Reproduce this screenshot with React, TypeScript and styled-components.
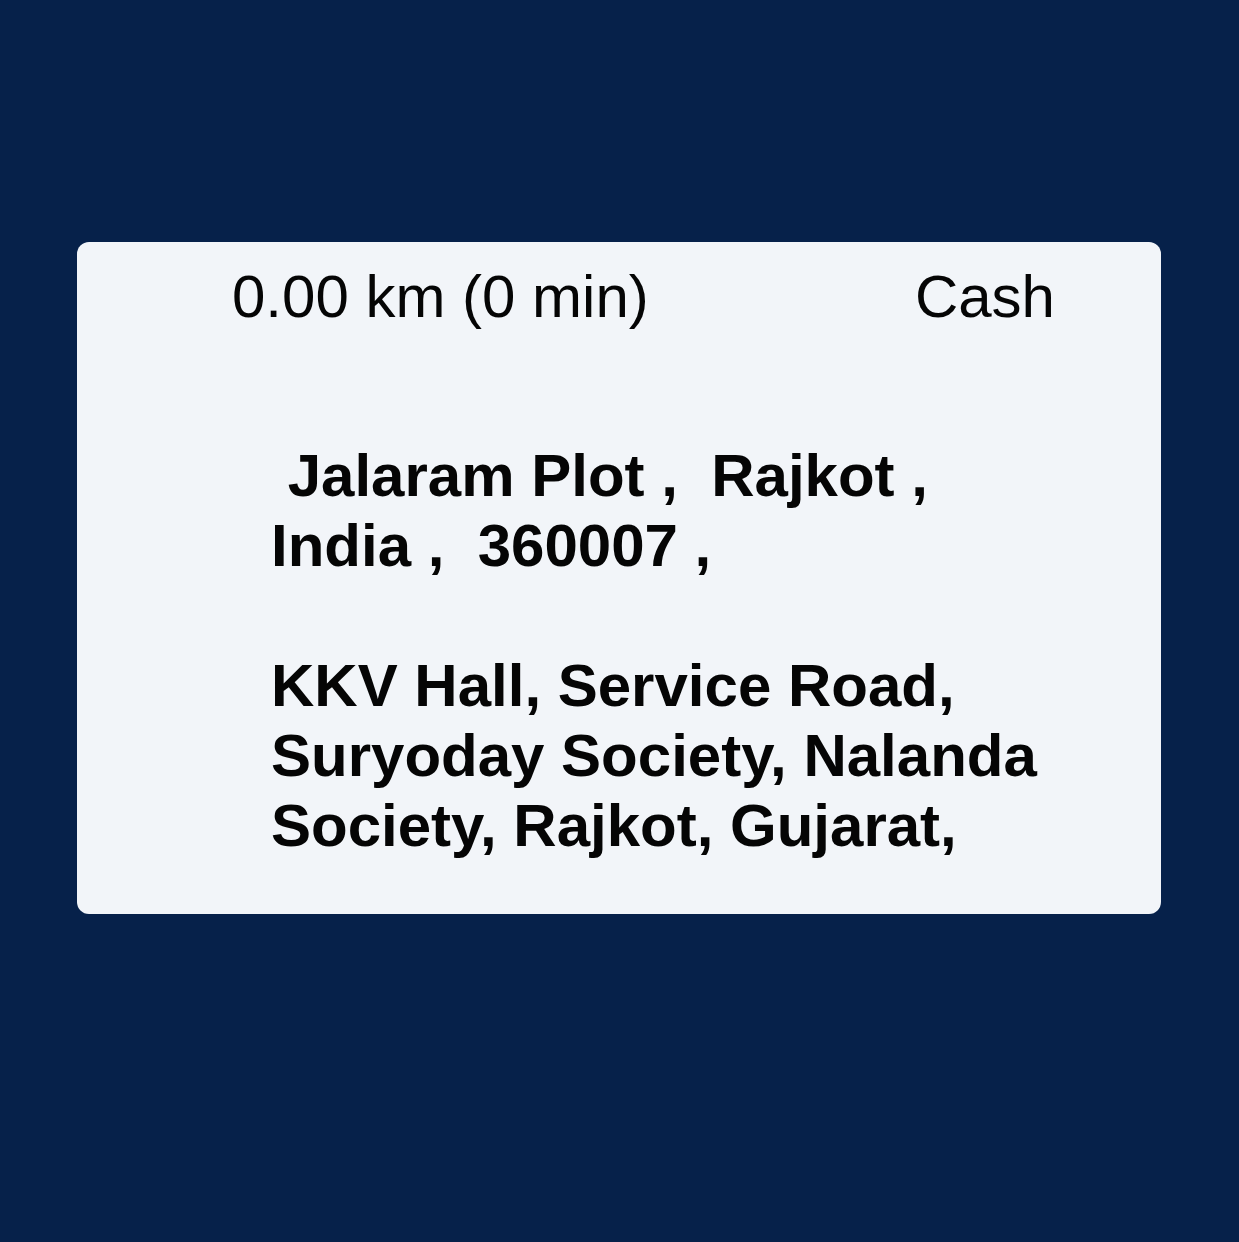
import React from 'react';
import styled, { createGlobalStyle } from 'styled-components';

const GlobalStyle = createGlobalStyle`
  html, body {
    margin: 0;
    padding: 0;
    background: #06214a;
  }
  body {
    font-family: 'Liberation Sans', Arial, Helvetica, sans-serif;
  }
`;

const Page = styled.div`
  width: 1239px;
  height: 1242px;
  background: #06214a;
  display: flex;
  align-items: center;
  justify-content: center;
  box-sizing: border-box;
  padding-bottom: 86px;
`;

const Card = styled.div`
  width: 1084px;
  height: 672px;
  box-sizing: border-box;
  background: #f2f5f9;
  border-radius: 12px;
  padding: 20px 106px 0 155px;
  display: flex;
  flex-direction: column;
  margin-left: -1px;
`;

const InfoRow = styled.div`
  display: flex;
  justify-content: space-between;
  align-items: baseline;
`;

const InfoText = styled.span`
  font-size: 60px;
  line-height: 70px;
  font-weight: 400;
  color: #050505;
`;

const Address = styled.div<{ $gap?: number }>`
  margin-top: ${({ $gap }) => $gap ?? 0}px;
  margin-left: 39px;
  max-width: 800px;
  font-size: 60px;
  line-height: 70px;
  font-weight: 700;
  letter-spacing: 0;
  color: #050505;
  white-space: pre-wrap;
`;

const App = () => {
  return (
    <>
      <GlobalStyle />
      <Page>
        <Card>
          <InfoRow>
            <InfoText>0.00 km (0 min)</InfoText>
            <InfoText>Cash</InfoText>
          </InfoRow>
          <Address $gap={109}>{' Jalaram Plot ,  Rajkot ,  India ,  360007 ,'}</Address>
          <Address $gap={70}>KKV Hall, Service Road, Suryoday Society, Nalanda Society, Rajkot, Gujarat,</Address>
        </Card>
      </Page>
    </>
  );
};

export default App;
